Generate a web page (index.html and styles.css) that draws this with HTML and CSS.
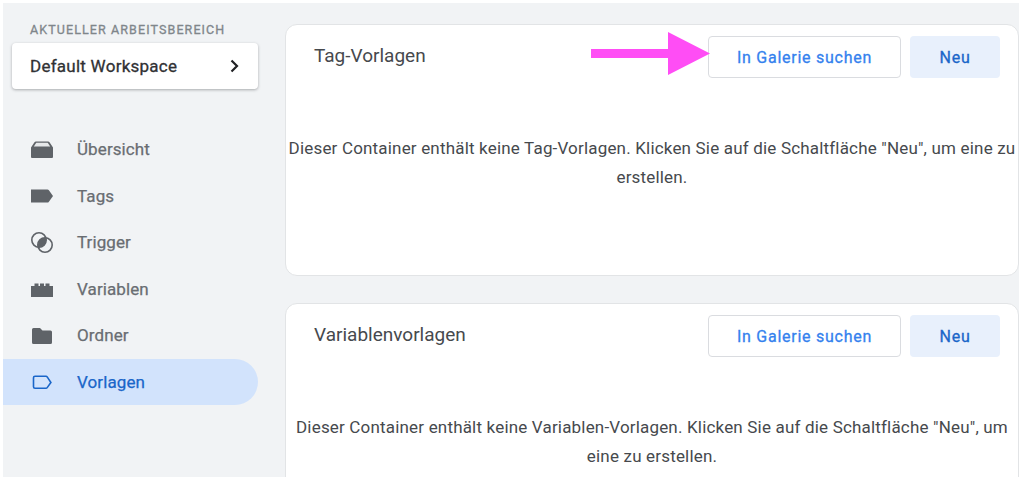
FILE: index.html
```html
<!DOCTYPE html>
<html lang="de">
<head>
    <meta charset="UTF-8">
    <meta name="viewport" content="width=device-width, initial-scale=1.0">
    <title>Vorlagen</title>
    <link rel="stylesheet" href="styles.css">
</head>
<body>
    <div class="app">
        <aside class="sidebar">
            <div class="workspace-label">AKTUELLER ARBEITSBEREICH</div>
            <div class="workspace-card">
                <span>Default Workspace</span>
                <svg class="chevron" width="12" height="16" viewBox="0 0 12 16"><path d="M2.5 2.500l5.500 5.500-5.500 5.500" fill="none" stroke="#202124" stroke-width="2.200"/></svg>
            </div>
            <nav class="nav">
                <div class="nav-item">
                    <svg class="nav-icon" width="24" height="24" viewBox="0 0 24 24"><path d="M6 4.500h12a2 2 0 0 1 1.700.9L23 10.500V20a1 1 0 0 1-1 1H2a1 1 0 0 1-1-1v-9.500l3.300-5.100A2 2 0 0 1 6 4.500z" fill="#5f6368"/><path d="M6.300 5.800h11.400l2.500 3.700H3.800z" fill="#e6e8ea"/></svg>
                    <span>Übersicht</span>
                </div>
                <div class="nav-item">
                    <svg class="nav-icon" width="24" height="24" viewBox="0 0 24 24"><path d="M1 5.500h16.500a1.500 1.500 0 0 1 1.200.6L23 12l-4.300 5.900a1.500 1.500 0 0 1-1.200.6H1z" fill="#5f6368"/></svg>
                    <span>Tags</span>
                </div>
                <div class="nav-item">
                    <svg class="nav-icon" width="24" height="24" viewBox="0 0 24 24">
                        <clipPath id="lens"><circle cx="9" cy="10" r="7.200"/></clipPath>
                        <circle cx="9" cy="10" r="7.200" fill="none" stroke="#5f6368" stroke-width="1.600"/>
                        <circle cx="15" cy="15" r="7.200" fill="none" stroke="#5f6368" stroke-width="1.600"/>
                        <circle cx="15" cy="15" r="7.200" fill="#5f6368" clip-path="url(#lens)"/>
                    </svg>
                    <span>Trigger</span>
                </div>
                <div class="nav-item">
                    <svg class="nav-icon" width="24" height="24" viewBox="0 0 24 24"><path d="M1 9h3.500V6.500h4V9h1.500V6.500h4V9h1.500V6.500h4V9H23v11H1z" fill="#5f6368"/></svg>
                    <span>Variablen</span>
                </div>
                <div class="nav-item">
                    <svg class="nav-icon" width="24" height="24" viewBox="0 0 24 24"><path d="M3.500 5h6.500l2.500 2.500h8A1.500 1.500 0 0 1 22 9v10.500a1.500 1.500 0 0 1-1.500 1.500h-17A1.500 1.500 0 0 1 2 19.500v-13A1.500 1.500 0 0 1 3.500 5z" fill="#5f6368"/></svg>
                    <span>Ordner</span>
                </div>
                <div class="nav-item active">
                    <svg class="nav-icon" width="24" height="24" viewBox="0 0 24 24"><path d="M5 6.300h11a1.500 1.500 0 0 1 1.200.6l3.700 5.600-3.700 5.100a1.500 1.500 0 0 1-1.200.6H5a1.500 1.500 0 0 1-1.500-1.500V7.800A1.500 1.500 0 0 1 5 6.300z" fill="none" stroke="#1a66c9" stroke-width="1.600"/></svg>
                    <span>Vorlagen</span>
                </div>
            </nav>
        </aside>

        <main class="content">
            <section class="card">
                <div class="card-header">
                    <h2>Tag-Vorlagen</h2>
                    <div class="actions">
                        <button class="btn btn-outline">In Galerie suchen</button>
                        <button class="btn btn-soft">Neu</button>
                    </div>
                </div>
                <p class="empty">Dieser Container enthält keine Tag-Vorlagen. Klicken Sie auf die Schaltfläche "Neu", um eine zu erstellen.</p>
            </section>
            <section class="card">
                <div class="card-header">
                    <h2>Variablenvorlagen</h2>
                    <div class="actions">
                        <button class="btn btn-outline">In Galerie suchen</button>
                        <button class="btn btn-soft">Neu</button>
                    </div>
                </div>
                <p class="empty">Dieser Container enthält keine Variablen-Vorlagen. Klicken Sie auf die Schaltfläche "Neu", um eine zu erstellen.</p>
            </section>
        </main>

        <!-- Pfeil liegt ueber der Karte -->
        <svg class="arrow" width="119" height="43" viewBox="0 0 119 43"><path d="M0 17h77V0l42 21.500L77 43V26H0z" fill="#ff4df5"/></svg>
    </div>
</body>
</html>
```

FILE: styles.css
```css
* {
    margin: 0;
    padding: 0;
    box-sizing: border-box;
}

body {
    font-family: Roboto, "Liberation Sans", sans-serif;
    background: #fff;
    height: 490px;
    overflow: hidden;
    padding: 3px 5px 0 3px;
}

.app {
    position: relative;
    display: flex;
    height: 474px;
    background: #f1f3f5;
    overflow: hidden;
}

.sidebar {
    flex: 0 0 255px;
    padding-top: 20px;
}

.workspace-label {
    margin-left: 27px;
    font-size: 12.500px;
    line-height: 14px;
    letter-spacing: 1.100px;
    -webkit-text-stroke: 0.3px;
    color: #80868b;
}

.workspace-card {
    display: flex;
    align-items: center;
    justify-content: space-between;
    margin: 6px 0 0 9px;
    height: 46px;
    padding: 0 17px 0 18px;
    background: #fff;
    border-radius: 4px;
    box-shadow: 0 1px 3px rgba(60, 64, 67, 0.4);
    font-size: 17px;
    letter-spacing: 0.25px;
    -webkit-text-stroke: 0.3px;
    color: #303134;
}

.nav {
    margin-top: 37px;
}

.nav-item {
    display: flex;
    align-items: center;
    height: 46.500px;
    padding-left: 27px;
    font-size: 17px;
    letter-spacing: 0.1px;
    -webkit-text-stroke: 0.25px;
    color: #696d72;
}

.nav-icon {
    flex: none;
    margin-right: 23px;
}

.nav-item.active {
    background: #d2e3fc;
    border-radius: 0 23px 23px 0;
    color: #1a66c9;
}

.content {
    flex: 1;
    margin-left: 27px;
    padding-top: 21px;
    display: flex;
    flex-direction: column;
    gap: 27px;
}

.card {
    flex: none;
    height: 252px;
    background: #fff;
    border: 1px solid #e2e4e6;
    border-radius: 12px;
    padding: 11px 18px 0 28px;
}

.card-header {
    display: flex;
    align-items: center;
    justify-content: space-between;
    height: 42px;
}

.card-header h2 {
    margin-bottom: 4px;
    font-size: 19px;
    font-weight: 400;
    color: #46494d;
}

.actions {
    display: flex;
    gap: 9px;
}

.btn {
    height: 42px;
    font-family: inherit;
    font-size: 16px;
    letter-spacing: 0.75px;
    -webkit-text-stroke: 0.3px;
    border-radius: 4px;
}

.btn-outline {
    width: 193px;
    background: #fff;
    border: 1px solid #dadce0;
    color: #3481ee;
}

.btn-soft {
    width: 90px;
    background: #e8f0fc;
    border: none;
    color: #1a66c9;
}

.empty {
    margin: 56px -17px 0 -27px;
    text-align: center;
    font-size: 17px;
    letter-spacing: 0.18px;
    line-height: 28.500px;
    color: #46494d;
}

.arrow {
    position: absolute;
    left: 587.500px;
    top: 29px;
}
```
